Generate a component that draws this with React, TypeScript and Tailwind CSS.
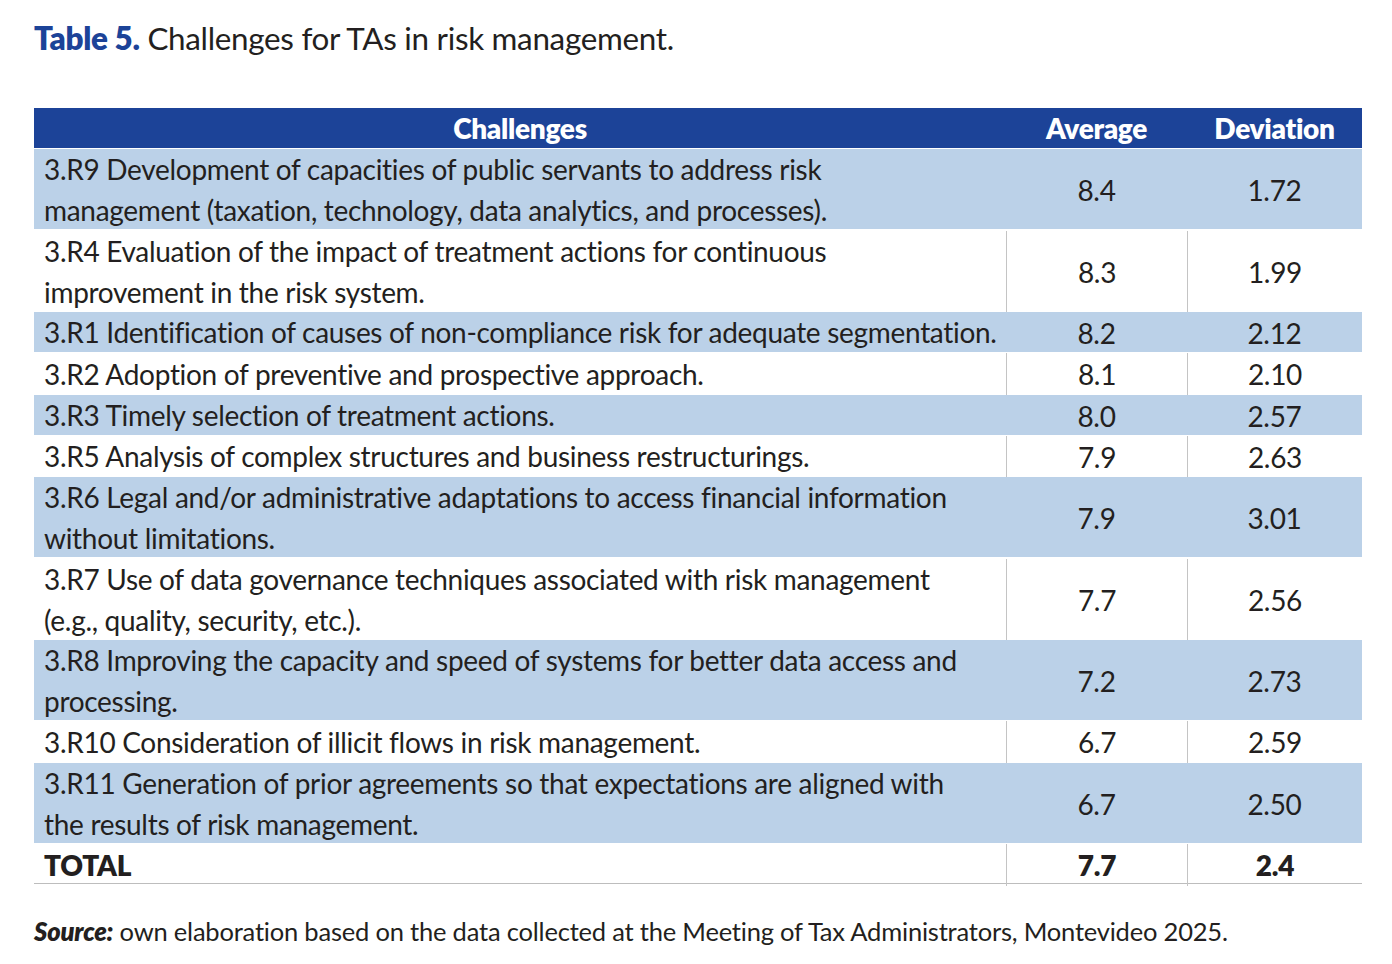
import React from "react";

type Row = { lines: string[]; avg: string; dev: string };

const rows: Row[] = [
  { lines: ["3.R9 Development of capacities of public servants to address risk", "management (taxation, technology, data analytics, and processes)."], avg: "8.4", dev: "1.72" },
  { lines: ["3.R4 Evaluation of the impact of treatment actions for continuous", "improvement in the risk system."], avg: "8.3", dev: "1.99" },
  { lines: ["3.R1 Identification of causes of non-compliance risk for adequate segmentation."], avg: "8.2", dev: "2.12" },
  { lines: ["3.R2 Adoption of preventive and prospective approach."], avg: "8.1", dev: "2.10" },
  { lines: ["3.R3 Timely selection of treatment actions."], avg: "8.0", dev: "2.57" },
  { lines: ["3.R5 Analysis of complex structures and business restructurings."], avg: "7.9", dev: "2.63" },
  { lines: ["3.R6 Legal and/or administrative adaptations to access financial information", "without limitations."], avg: "7.9", dev: "3.01" },
  { lines: ["3.R7 Use of data governance techniques associated with risk management", "(e.g., quality, security, etc.)."], avg: "7.7", dev: "2.56" },
  { lines: ["3.R8 Improving the capacity and speed of systems for better data access and", "processing."], avg: "7.2", dev: "2.73" },
  { lines: ["3.R10 Consideration of illicit flows in risk management."], avg: "6.7", dev: "2.59" },
  { lines: ["3.R11 Generation of prior agreements so that expectations are aligned with", "the results of risk management."], avg: "6.7", dev: "2.50" },
];

const font = { fontFamily: "Lato, 'Noto Sans', sans-serif" };

export default function App() {
  return (
    <div className="w-[1392px] h-[964px] bg-white px-[34px] pt-[18px] text-[#231f20]" style={font}>
      <div className="text-[31.4px] leading-[40px] tracking-[-0.3px]">
        <span className="font-extrabold text-[#1c4398]">Table 5.</span> Challenges for TAs in risk management.
      </div>
      <div className="mt-[50px] w-[1328px] flex flex-col gap-[1.33px] text-[28px] tracking-[-0.3px]">
        <div className="grid grid-cols-[972px_181px_175px] h-[40px] bg-[#1c4398] text-white font-extrabold items-center text-center leading-[40px]">
          <div>Challenges</div>
          <div>Average</div>
          <div>Deviation</div>
        </div>
        {rows.map((r, i) => {
          const blue = i % 2 === 0;
          const h = r.lines.length === 2 ? "h-[80px]" : "h-[40px]";
          return (
            <div key={i} className={`grid grid-cols-[972px_181px_175px] ${h} ${blue ? "bg-[#bbd1e8]" : "bg-white"}`}>
              <div className="pl-[10px] leading-[41px] flex flex-col justify-center">
                {r.lines.map((l, j) => (
                  <div key={j} className="whitespace-nowrap">{l}</div>
                ))}
              </div>
              <div className={`flex items-center justify-center ${blue ? "" : "border-l border-[#c4c4c4]"}`}>{r.avg}</div>
              <div className={`flex items-center justify-center ${blue ? "" : "border-l border-[#c4c4c4]"}`}>{r.dev}</div>
            </div>
          );
        })}
        <div className="grid grid-cols-[972px_181px_175px] h-[40px] font-extrabold border-b border-[#bdbdbd]">
          <div className="pl-[10px] flex items-center">TOTAL</div>
          <div className="flex items-center justify-center border-l border-[#c4c4c4]">7.7</div>
          <div className="flex items-center justify-center border-l border-[#c4c4c4]">2.4</div>
        </div>
      </div>
      <div className="mt-[27px] text-[25.5px] leading-[40px] tracking-[-0.2px]">
        <span className="font-extrabold italic">Source:</span> own elaboration based on the data collected at the Meeting of Tax Administrators, Montevideo 2025.
      </div>
    </div>
  );
}
